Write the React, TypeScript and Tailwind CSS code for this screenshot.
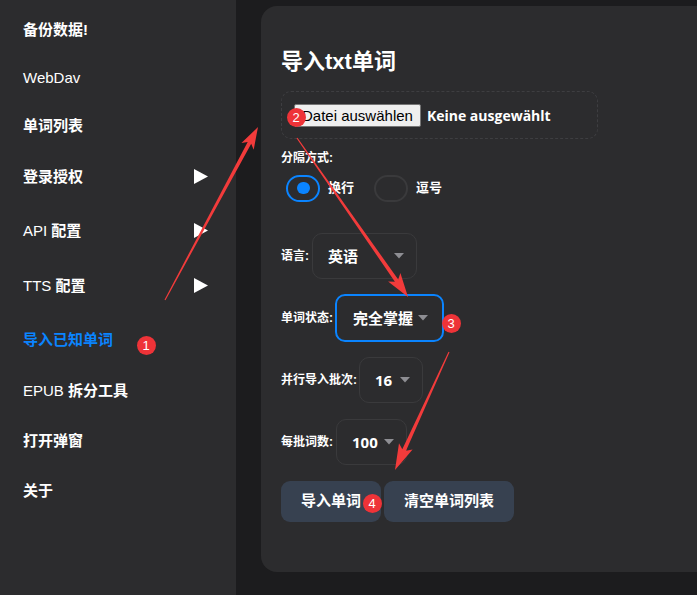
import React from "react";

type Seg = { t: string; latin?: boolean };
type Item = { segs: Seg[]; h: number; arrow?: boolean; active?: boolean };

const items: Item[] = [
  { segs: [{ t: "备份数据!" }], h: 49 },
  { segs: [{ t: "WebDav", latin: true }], h: 47 },
  { segs: [{ t: "单词列表" }], h: 49 },
  { segs: [{ t: "登录授权" }], h: 53, arrow: true },
  { segs: [{ t: "API", latin: true }, { t: " 配置" }], h: 55, arrow: true },
  { segs: [{ t: "TTS", latin: true }, { t: " 配置" }], h: 55, arrow: true },
  { segs: [{ t: "导入已知单词" }], h: 52, active: true },
  { segs: [{ t: "EPUB", latin: true }, { t: " 拆分工具" }], h: 50 },
  { segs: [{ t: "打开弹窗" }], h: 50 },
  { segs: [{ t: "关于" }], h: 50 },
];

function arrowPoints(
  x0: number,
  y0: number,
  x1: number,
  y1: number,
  headLen: number,
  headHalf: number,
  w0: number,
  w1: number
) {
  const dx = x1 - x0;
  const dy = y1 - y0;
  const L = Math.hypot(dx, dy);
  const ux = dx / L;
  const uy = dy / L;
  const nx = -uy;
  const ny = ux;
  const bx = x1 - ux * headLen;
  const by = y1 - uy * headLen;
  const sx = bx + ux * 4;
  const sy = by + uy * 4;
  const pts: [number, number][] = [
    [x0 + (nx * w0) / 2, y0 + (ny * w0) / 2],
    [sx + (nx * w1) / 2, sy + (ny * w1) / 2],
    [bx + nx * headHalf, by + ny * headHalf],
    [x1, y1],
    [bx - nx * headHalf, by - ny * headHalf],
    [sx - (nx * w1) / 2, sy - (ny * w1) / 2],
    [x0 - (nx * w0) / 2, y0 - (ny * w0) / 2],
  ];
  return pts.map((p) => `${p[0].toFixed(1)},${p[1].toFixed(1)}`).join(" ");
}

function Caret() {
  return (
    <svg width="10" height="6" viewBox="0 0 10 6" className="shrink-0">
      <polygon points="0,0 10,0 5,5.5" fill="#8e8e93" />
    </svg>
  );
}

function Select({
  value,
  w,
  active,
}: {
  value: string;
  w: string;
  active?: boolean;
}) {
  return (
    <div
      className={
        active
          ? `${w} h-[48px] rounded-[10px] border-2 border-[#0a84ff] flex items-center justify-between pl-[16px] pr-[14px]`
          : `${w} h-[46px] rounded-[10px] border border-[#3a3a3c] flex items-center justify-between pl-[15px] pr-[12px]`
      }
    >
      <span className="text-[15px] font-bold text-white leading-none font-['Open_Sans','Noto_Sans_CJK_SC',sans-serif]">
        {value}
      </span>
      <Caret />
    </div>
  );
}

function Badge({ n, x, y }: { n: number; x: number; y: number }) {
  return (
    <div
      className="absolute w-[19px] h-[19px] rounded-full bg-[#ee3338] text-white text-[13px] leading-none flex items-center justify-center font-['Liberation_Sans',sans-serif]"
      style={{ left: x - 9.5, top: y - 9.5 }}
    >
      {n}
    </div>
  );
}

export default function App() {
  return (
    <div className="relative flex w-[697px] h-[595px] overflow-hidden bg-[#1c1c1e] font-['Liberation_Sans','Noto_Sans_CJK_SC',sans-serif] text-white">
      {/* Sidebar */}
      <div className="w-[236px] shrink-0 h-full bg-[#2c2c2e] pt-[5px]">
        {items.map((it, i) => (
          <div
            key={i}
            className="flex items-center justify-between pl-[23px] pr-[28px]"
            style={{ height: it.h }}
          >
            <span
              className={`text-[15px] leading-none ${
                it.active ? "text-[#0a84ff]" : "text-white"
              }`}
            >
              {it.segs.map((s, j) => (
                <span key={j} className={s.latin ? "font-normal" : "font-bold"}>
                  {s.t}
                </span>
              ))}
            </span>
            {it.arrow && (
              <svg width="14" height="15" viewBox="0 0 14 15">
                <polygon points="0,0 14,7.5 0,15" fill="#ffffff" />
              </svg>
            )}
          </div>
        ))}
      </div>

      {/* Main */}
      <div className="flex-1 h-full pl-[25px] pt-[6px] mr-[-30px]">
        <div className="h-[566px] rounded-[16px] bg-[#2c2c2e] pl-[20px] pt-[42px]">
          <h2 className="text-[22px] leading-[28px] font-bold text-white">导入txt单词</h2>

          <div className="mt-[15px] w-[317px] h-[48px] rounded-[10px] border border-dashed border-[#3e3e41] flex items-center pl-[12px]">
            <div className="h-[23px] px-[7px] flex items-center bg-[#efefef] border border-[#767676] rounded-[2px] text-black text-[15px] leading-none font-['Liberation_Sans',sans-serif]">
              Datei auswählen
            </div>
            <span className="ml-[6px] text-[14px] font-bold text-white font-['Open_Sans',sans-serif]">
              Keine ausgewählt
            </span>
          </div>

          <div className="mt-[11px] text-[12px] leading-[16px] font-bold">分隔方式:</div>

          <div className="mt-[8px] h-[28px] flex items-center pl-[5px]">
            <div className="w-[34px] h-[27px] rounded-full border-2 border-[#0a84ff] flex items-center justify-center">
              <div className="w-[13px] h-[12px] rounded-full bg-[#0a84ff]" />
            </div>
            <span className="ml-[8px] text-[13px] font-bold">换行</span>
            <div className="ml-[20px] w-[34px] h-[27px] rounded-full border-2 border-[#3a3a3c]" />
            <span className="ml-[8px] text-[13px] font-bold">逗号</span>
          </div>

          <div className="mt-[31px] flex items-center gap-[3px]">
            <span className="text-[12px] font-bold">语言:</span>
            <Select value="英语" w="w-[105px]" />
          </div>

          <div className="mt-[15px] flex items-center gap-[2px]">
            <span className="text-[12px] font-bold">单词状态:</span>
            <Select value="完全掌握" w="w-[109px]" active />
          </div>

          <div className="mt-[15px] flex items-center gap-[2px]">
            <span className="text-[12px] font-bold">并行导入批次:</span>
            <Select value="16" w="w-[64px]" />
          </div>

          <div className="mt-[16px] flex items-center gap-[3px]">
            <span className="text-[12px] font-bold">每批词数:</span>
            <Select value="100" w="w-[71px]" />
          </div>

          <div className="mt-[16px] flex items-center gap-[3px]">
            <button className="h-[41px] w-[100px] rounded-[9px] bg-[#374150] text-[15px] font-bold text-white">
              导入单词
            </button>
            <button className="h-[41px] w-[130px] rounded-[9px] bg-[#374150] text-[15px] font-bold text-white">
              清空单词列表
            </button>
          </div>
        </div>
      </div>

      {/* Annotations overlay */}
      <svg
        className="absolute left-0 top-0 pointer-events-none"
        width="697"
        height="595"
        viewBox="0 0 697 595"
      >
        <polygon points={arrowPoints(165, 300, 258, 127, 22, 7, 1.2, 4)} fill="#f23b3b" />
        <polygon points={arrowPoints(297, 138, 408, 297, 24, 7.5, 1.2, 4)} fill="#f23b3b" />
        <polygon points={arrowPoints(449, 352, 395, 470, 26, 7.5, 1.2, 4)} fill="#f23b3b" />
      </svg>
      <Badge n={1} x={146} y={345} />
      <Badge n={2} x={296} y={117} />
      <Badge n={3} x={451} y={323} />
      <Badge n={4} x={372} y={503} />
    </div>
  );
}
